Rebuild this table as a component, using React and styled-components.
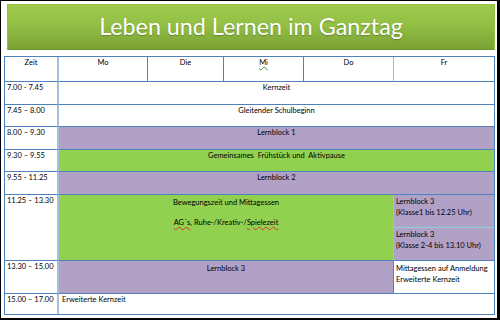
import React from 'react'
import styled, { createGlobalStyle } from 'styled-components'

const GlobalStyle = createGlobalStyle`
  html, body {
    margin: 0;
    padding: 0;
    background: #ffffff;
  }
  * {
    box-sizing: border-box;
  }
`

const Page = styled.div`
  width: 500px;
  height: 320px;
  border-top: 1px solid #000;
  border-left: 1px solid #000;
  border-right: 3px solid #000;
  border-bottom: 2px solid #000;
  background: #fff;
  padding: 3px 2px 0 3px;
  font-family: Lato, 'Open Sans', sans-serif;
  color: #000;
  overflow: hidden;
`

const TitleBar = styled.div`
  margin-left: 3px;
  width: 488px;
  height: 46px;
  border: 1px solid #8ec43f;
  border-bottom-color: #6f9430;
  background: linear-gradient(#a0c94f 0%, #93bf45 45%, #7aa134 100%);
  display: flex;
  align-items: center;
  justify-content: center;
  padding-bottom: 2px;
`

const Title = styled.h1`
  margin: 0;
  font-family: Lato, 'Open Sans', sans-serif;
  font-weight: 400;
  font-size: 23.3px;
  color: #fff;
  text-shadow: 0 1px 1px rgba(60, 80, 20, 0.45);
`

const Table = styled.div`
  margin-top: 6px;
  width: 491px;
  height: 259px;
  border: 1px solid #4f81bd;
  display: grid;
  grid-template-columns: 54px 89px 76px 80px 90px 100px;
  grid-template-rows: 25px 23px 22px 23px 22px 23px 66px 33px 20px;
`

const fills = {
  white: '#ffffff',
  purple: '#b2a1c7',
  green: '#92d050',
}

const Cell = styled.div`
  grid-column: ${(p) => p.$col || 'auto'};
  background: ${(p) => fills[p.$fill || 'white']};
  border-bottom: ${(p) => (p.$last ? 'none' : `1px solid ${p.$bottom || '#4f81bd'}`)};
  border-right: ${(p) => (p.$end ? 'none' : `${p.$rw || 1}px solid ${p.$right || '#4f81bd'}`)};
  font-size: 7.5px;
  line-height: 10.5px;
  padding: ${(p) => p.$pad || '1px 2px 0 2px'};
  text-align: ${(p) => p.$align || 'left'};
  white-space: nowrap;
  overflow: hidden;
`

const TimeCell = styled(Cell).attrs({ $rw: 2, $right: '#a6bfdd' })``

const Split = styled.div`
  grid-column: 6;
  display: flex;
  flex-direction: column;
  border-bottom: 1px solid #4f81bd;
`

const SplitPart = styled.div`
  flex: 1;
  background: #b2a1c7;
  border-bottom: ${(p) => (p.$top ? '1px solid #8fd0dc' : 'none')};
  font-size: 7.5px;
  line-height: 10.5px;
  padding: 2px 2px 0 2px;
  white-space: nowrap;
`

const Gap = styled.div`
  height: 9px;
`

const Squiggle = styled.span`
  text-decoration: underline wavy ${(p) => p.$color};
  text-decoration-thickness: 0.5px;
  text-underline-offset: 1px;
`

const days = ['Mo', 'Die', 'Mi', 'Do', 'Fr']

export default function App() {
  return (
    <Page>
      <GlobalStyle />
      <TitleBar>
        <Title>Leben und Lernen im Ganztag</Title>
      </TitleBar>
      <Table>
        <TimeCell $align="center">Zeit</TimeCell>
        {days.map((d, i) => (
          <Cell
            key={d}
            $align="center"
            $end={i === 4}
            $right={i === 3 ? '#95b8dd' : '#4f81bd'}
          >
            {d === 'Mi' ? <Squiggle $color="#3a9a3a">Mi</Squiggle> : d}
          </Cell>
        ))}

        <TimeCell>7.00 - 7.45</TimeCell>
        <Cell $col="2 / 7" $end $align="center">Kernzeit</Cell>

        <TimeCell>7.45 – 8.00</TimeCell>
        <Cell $col="2 / 7" $end $align="center">Gleitender Schulbeginn</Cell>

        <TimeCell>8.00 – 9.30</TimeCell>
        <Cell $col="2 / 7" $end $fill="purple" $align="center">Lernblock 1</Cell>

        <TimeCell>9.30 – 9.55</TimeCell>
        <Cell $col="2 / 7" $end $fill="green" $align="center">
          Gemeinsames&nbsp; Frühstück und&nbsp; Aktivpause
        </Cell>

        <TimeCell>9.55 - 11.25</TimeCell>
        <Cell $col="2 / 7" $end $fill="purple" $align="center">Lernblock 2</Cell>

        <TimeCell>11.25 – 13.30</TimeCell>
        <Cell $col="2 / 6" $fill="green" $right="#8fd0a8" $align="center" $pad="3px 2px 0 2px">
          Bewegungszeit und Mittagessen
          <Gap />
          <Squiggle $color="#e03030">AG´s</Squiggle>, Ruhe-/Kreativ-/<Squiggle $color="#e03030">Spielezeit</Squiggle>
        </Cell>
        <Split>
          <SplitPart $top>
            Lernblock 3
            <br />
            (Klasse1 bis 12.25 Uhr)
          </SplitPart>
          <SplitPart>
            Lernblock 3
            <br />
            (Klasse 2-4 bis 13.10 Uhr)
          </SplitPart>
        </Split>

        <TimeCell>13.30 – 15.00</TimeCell>
        <Cell $col="2 / 6" $fill="purple" $align="center" $pad="3px 2px 0 2px">Lernblock 3</Cell>
        <Cell $end $pad="3px 2px 0 2px">
          Mittagessen auf Anmeldung
          <br />
          Erweiterte Kernzeit
        </Cell>

        <TimeCell $last>15.00 – 17.00</TimeCell>
        <Cell $col="2 / 7" $end $last $pad="1px 3px 0 3px">Erweiterte Kernzeit</Cell>
      </Table>
    </Page>
  )
}
